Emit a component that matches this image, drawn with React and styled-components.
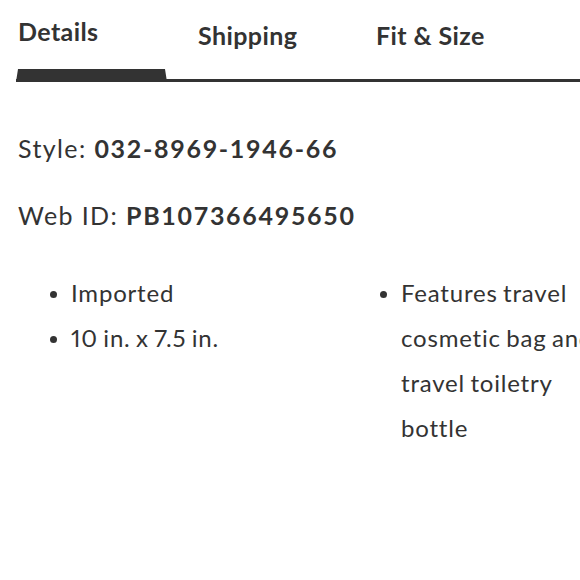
import React from 'react';
import styled, { createGlobalStyle } from 'styled-components';

const GlobalStyle = createGlobalStyle`
  html, body {
    margin: 0;
    padding: 0;
    background: #ffffff;
    overflow: hidden;
  }
  body {
    font-family: Lato, "Open Sans", sans-serif;
    color: #333333;
  }
`;

const Page = styled.div`
  width: 580px;
  height: 580px;
  overflow: hidden;
  padding: 0 0 0 16px;
  box-sizing: border-box;
`;

const TabBar = styled.div`
  position: relative;
  display: flex;
  align-items: flex-start;
  height: 82px;
  border-bottom: 3px solid #333333;
  box-sizing: border-box;
  width: 600px;
`;

const Tab = styled.div`
  font-size: 25px;
  line-height: 30px;
  font-weight: 700;
  color: #333333;
  width: ${(p) => p.width}px;
  padding-left: 2px;
  padding-top: ${(p) => (p.active ? 16 : 20)}px;
  letter-spacing: 0.4px;
`;

const ActiveBar = styled.div`
  position: absolute;
  left: 0;
  bottom: -3px;
  width: 151px;
  height: 13px;
  background: #333333;
  clip-path: polygon(2px 0, 149px 0, 151px 100%, 0 100%);
`;

const Meta = styled.div`
  padding: 51px 0 0 2px;
  display: flex;
  flex-direction: column;
  gap: 37px;
`;

const MetaLine = styled.div`
  font-size: 25px;
  line-height: 30px;
  white-space: nowrap;
  letter-spacing: 1.4px;

  b {
    font-weight: 700;
    letter-spacing: 1.7px;
  }
`;

const Features = styled.div`
  display: grid;
  grid-template-columns: 330px 260px;
  padding: 40px 0 0 34px;
  width: 800px;
`;

const List = styled.ul`
  list-style: none;
  margin: 0;
  padding: 0;
  width: ${(p) => p.width}px;
`;

const Item = styled.li`
  position: relative;
  padding-left: 21px;
  font-size: 24px;
  line-height: 45px;
  letter-spacing: 0.8px;
  word-spacing: -1.5px;
  font-variant-numeric: proportional-nums;

  &::before {
    content: '';
    position: absolute;
    left: 0;
    top: 21px;
    width: 7px;
    height: 7px;
    border-radius: 50%;
    background: #333333;
  }
`;

export default function App() {
  return (
    <>
      <GlobalStyle />
      <Page>
        <TabBar>
          <Tab width={178} active>Details</Tab>
          <Tab width={176}>Shipping</Tab>
          <Tab width={150}>Fit &amp; Size</Tab>
          <ActiveBar />
        </TabBar>
        <Meta>
          <MetaLine>
            Style: <b>032-8969-1946-66</b>
          </MetaLine>
          <MetaLine>
            Web ID: <b>PB107366495650</b>
          </MetaLine>
        </Meta>
        <Features>
          <List width={300}>
            <Item>Imported</Item>
            <Item>10 in. x 7.5 in.</Item>
          </List>
          <List width={230}>
            <Item>Features travel cosmetic bag and travel toiletry bottle</Item>
          </List>
        </Features>
      </Page>
    </>
  );
}
